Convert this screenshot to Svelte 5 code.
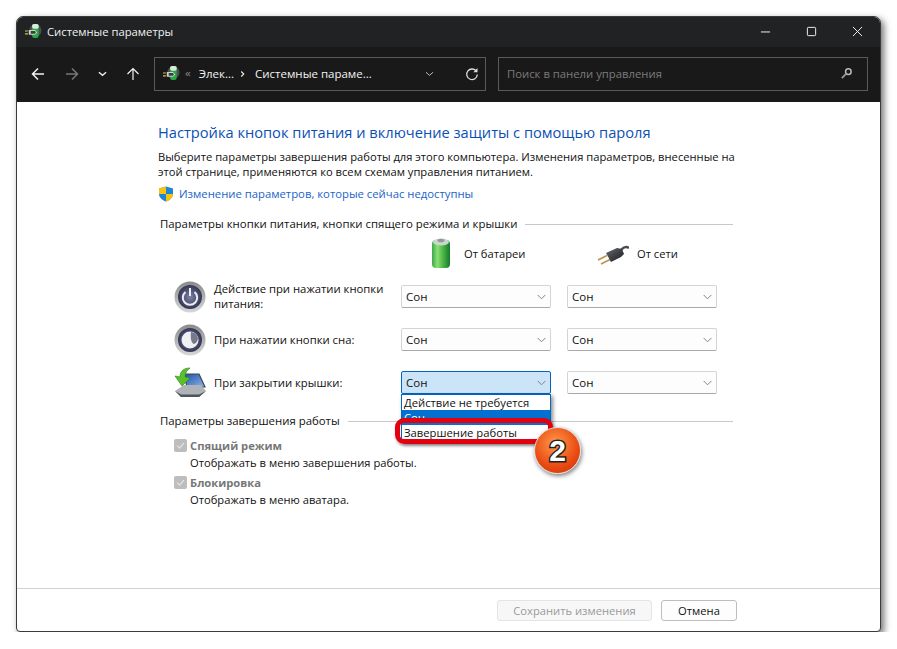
<script>
    const rows = [
        { label: "Действие при нажатии кнопки питания:", icon: "power" },
        { label: "При нажатии кнопки сна:", icon: "sleep" },
        { label: "При закрытии крышки:", icon: "lid" }
    ];

    const checks = [
        { title: "Спящий режим", note: "Отображать в меню завершения работы." },
        { title: "Блокировка", note: "Отображать в меню аватара." }
    ];
</script>

{#snippet appIcon()}
    <svg class="app-icon" viewBox="0 0 18 18">
        <circle cx="11" cy="8" r="6.500" fill="#4c4e4e" />
        <rect x="7.500" y="1" width="7" height="15" rx="2.500" fill="#27a845" />
        <rect x="7.500" y="1" width="7" height="5" rx="2" fill="#dbe8dd" />
        <path d="M4 7.500h6.500L13 10l-2.500 2.500H4z" fill="#cfd2d2" />
        <path d="M6 8.500h4.500l1 1.500-1 1.500H6z" fill="#3b3d3f" />
        <path d="M0 8.500h3M0 11.500h3" stroke="#e8c23a" stroke-width="1.200" />
    </svg>
{/snippet}

{#snippet chevron()}
    <svg class="chevron" viewBox="0 0 10 6">
        <path d="M.7.700 5 5 9.300.700" fill="none" stroke="#777" stroke-width="1" />
    </svg>
{/snippet}

<div class="window">
    <div class="titlebar">
        {@render appIcon()}
        <span class="title">Системные параметры</span>
        <div class="controls">
            <svg viewBox="0 0 12 12"><path d="M1 6.500h10" stroke="#fff" /></svg>
            <svg viewBox="0 0 12 12"><rect x="1.500" y="1.500" width="9" height="9" rx="1" fill="none" stroke="#fff" /></svg>
            <svg viewBox="0 0 12 12"><path d="M1 1l10 10M11 1 1 11" stroke="#fff" /></svg>
        </div>
    </div>

    <div class="toolbar">
        <div class="nav">
            <svg viewBox="0 0 14 14"><path d="M13 7H1.500M7 1.500 1.500 7 7 12.500" fill="none" stroke="#f2f2f2" stroke-width="1.500" /></svg>
            <svg viewBox="0 0 14 14"><path d="M1 7h11.500M7 1.500 12.500 7 7 12.500" fill="none" stroke="#777" stroke-width="1.500" /></svg>
            <svg class="small" viewBox="0 0 10 6"><path d="M1 1l4 3.500L9 1" fill="none" stroke="#eee" stroke-width="1.500" /></svg>
            <svg viewBox="0 0 14 14"><path d="M7 13V1.500M1.500 7 7 1.500 12.500 7" fill="none" stroke="#f2f2f2" stroke-width="1.200" /></svg>
        </div>
        <div class="address">
            {@render appIcon()}
            <span class="dim">«</span>
            <span>Элек...</span>
            <svg class="sep" viewBox="0 0 6 8"><path d="M1.500 1l3 3-3 3" fill="none" stroke="#eee" stroke-width="1.300" /></svg>
            <span>Системные параме...</span>
            <svg class="addr-down" viewBox="0 0 10 6"><path d="M1 1l4 3.500L9 1" fill="none" stroke="#ccc" /></svg>
            <svg class="refresh" viewBox="0 0 14 14"><path d="M11.500 4.500A5.300 5.300 0 1 0 12.300 7.500" fill="none" stroke="#ddd" stroke-width="1.300" /><path d="M12.500 1v4.200H8.300z" fill="#ddd" /></svg>
        </div>
        <div class="search">
            <span>Поиск в панели управления</span>
            <svg viewBox="0 0 14 14"><circle cx="9" cy="5" r="3" fill="none" stroke="#bbb" stroke-width="1.600" /><path d="M6.500 7.500 2 12" stroke="#999" stroke-width="2" /></svg>
        </div>
    </div>

    <div class="content">
        <h1>Настройка кнопок питания и включение защиты с помощью пароля</h1>
        <p class="intro">Выберите параметры завершения работы для этого компьютера. Изменения параметров, внесенные на этой странице, применяются ко всем схемам управления питанием.</p>
        <div class="elevate">
            <svg viewBox="0 0 16 16">
                <path d="M8 .5 15 2.500V8c0 3.500-3 6-7 7.500C4 14 1 11.500 1 8V2.500z" fill="#1f86d6" />
                <path d="M8 .5V8H1V2.500zM8 8h7c0 3.500-3 6-7 7.500z" fill="#f5c312" />
            </svg>
            <span>Изменение параметров, которые сейчас недоступны</span>
        </div>

        <div class="section first"><span>Параметры кнопки питания, кнопки спящего режима и крышки</span><i></i></div>

        <div class="grid">
            <div class="head battery">
                <svg viewBox="0 0 22 32">
                    <defs>
                        <linearGradient id="batt" x1="0" x2="1" y1="0" y2="0">
                            <stop offset="0" stop-color="#3fa84a" />
                            <stop offset=".3" stop-color="#8adf74" />
                            <stop offset=".6" stop-color="#4fb846" />
                            <stop offset="1" stop-color="#157a2c" />
                        </linearGradient>
                    </defs>
                    <rect x="2" y="3" width="18" height="28" rx="4" fill="url(#batt)" />
                    <ellipse cx="11" cy="5" rx="8" ry="3.500" fill="#c9d6cc" />
                    <ellipse cx="11" cy="3.500" rx="3.500" ry="1.800" fill="#8f9a92" />
                </svg>
                <span>От батареи</span>
            </div>
            <div class="head mains">
                <svg viewBox="0 0 32 23">
                    <defs>
                        <linearGradient id="plug" x1="0" x2="1" y1="0" y2="1">
                            <stop offset="0" stop-color="#6a6c72" />
                            <stop offset=".5" stop-color="#3e4046" />
                            <stop offset="1" stop-color="#1f2024" />
                        </linearGradient>
                    </defs>
                    <path d="M24 8C27 5 29 4 32 6" fill="none" stroke="#4a4c52" stroke-width="2.500" />
                    <path d="M1 18 10 13.500M4 22 13 17.500" stroke="#c4924f" stroke-width="1.800" />
                    <path d="M9 11 20 6l5 1 2 5-3 3-10 5z" fill="url(#plug)" />
                </svg>
                <span>От сети</span>
            </div>

            {#each rows as row, i}
                <div class="row-icon">
                    {#if row.icon === "lid"}
                        <svg viewBox="0 0 32 32">
                            <defs>
                                <linearGradient id="screen" x1="0" x2="1" y1="0" y2="1">
                                    <stop offset="0" stop-color="#1e4fa8" />
                                    <stop offset="1" stop-color="#8db6e6" />
                                </linearGradient>
                            </defs>
                            <path d="M10 7h15l6 13H13z" fill="url(#screen)" stroke="#3e4650" stroke-width="1.200" />
                            <path d="M1 24 10 18h17l5 6-7 6H7z" fill="#aeb3b8" />
                            <path d="M1 24l6 6h18l7-6-7 3.500H7z" fill="#4e545c" />
                            <path d="M16 1C10 1 6 4 6 10L1 9l7 10 8-8-5-1c0-4 2-7 5-9z" fill="#5cc02c" stroke="#2f8f1c" stroke-width=".7" />
                        </svg>
                    {:else}
                        <svg viewBox="0 0 32 32">
                            <defs>
                                <linearGradient id={"ring" + i} x1="0" x2="0" y1="0" y2="1">
                                    <stop offset="0" stop-color="#8a8a8a" />
                                    <stop offset="1" stop-color="#d8d8d8" />
                                </linearGradient>
                                <radialGradient id={"disc" + i} cx=".5" cy=".5" r=".55">
                                    <stop offset="0" stop-color="#7c82a4" />
                                    <stop offset="1" stop-color="#2b2f4c" />
                                </radialGradient>
                            </defs>
                            <circle cx="16" cy="16" r="15.500" fill={"url(#ring" + i + ")"} />
                            <circle cx="16" cy="16" r="12" fill={"url(#disc" + i + ")"} />
                            {#if row.icon === "power"}
                                <path d="M11.500 11a7.200 7.200 0 1 0 9 0" fill="none" stroke="#eeeef4" stroke-width="2" />
                                <path d="M16 7v8" stroke="#eeeef4" stroke-width="2" />
                            {:else}
                                <circle cx="16" cy="16" r="8.500" fill="#f0f0f4" />
                                <path d="M17 8c4 .5 6.500 3 7 6.500-.500 3-2 5-4 5.500-2-.5-4-4-3-12z" fill="#77798a" />
                            {/if}
                        </svg>
                    {/if}
                </div>
                <div class="row-label">{row.label}</div>
                <div class="select" class:open={i === 2}>
                    <span>Сон</span>{@render chevron()}
                    {#if i === 2}
                        <ul class="list">
                            <li>Действие не требуется</li>
                            <li class="current">Сон</li>
                            <li>Завершение работы</li>
                        </ul>
                        <div class="marker"></div>
                        <div class="badge">2</div>
                    {/if}
                </div>
                <div class="select"><span>Сон</span>{@render chevron()}</div>
            {/each}
        </div>

        <div class="section second"><span>Параметры завершения работы</span><i></i></div>

        <div class="checks">
            {#each checks as item}
                <div class="check">
                    <div class="box">
                        <svg viewBox="0 0 10 8"><path d="M1 4l3 3 5-6" fill="none" stroke="#e6e6e6" stroke-width="1.200" /></svg>
                    </div>
                    <div>
                        <div class="check-title">{item.title}</div>
                        <div class="check-note">{item.note}</div>
                    </div>
                </div>
            {/each}
        </div>
    </div>

    <div class="footer">
        <button class="save" disabled>Сохранить изменения</button>
        <button class="cancel">Отмена</button>
    </div>
</div>

<style>
    :global(body) {
        background: #fff;
    }

    .window {
        box-sizing: border-box;
        width: 865px;
        height: 616px;
        margin: 16px 0 0 16px;
        display: flex;
        flex-direction: column;
        background: #fff;
        border: 1px solid #3a3a3a;
        border-radius: 7px 7px 4px 4px;
        box-shadow: 3px 3px 7px rgba(0, 0, 0, 0.55);
        font-family: "Open Sans", "Noto Sans", sans-serif;
        font-size: 11.300px;
        color: #111;
    }

    .titlebar {
        height: 30px;
        box-sizing: border-box;
        padding: 0 0 2px 8px;
        display: flex;
        align-items: center;
        background: #202224;
        color: #f2f2f2;
        border-radius: 6px 6px 0 0;
        flex-shrink: 0;
    }

    .app-icon {
        width: 17px;
        height: 17px;
        flex-shrink: 0;
    }

    .title {
        margin-left: 5px;
        font-size: 11.250px;
    }

    .controls {
        margin-left: auto;
        display: flex;
        gap: 35px;
        padding-right: 17px;
    }

    .controls svg {
        width: 11px;
        height: 11px;
    }

    .toolbar {
        height: 55px;
        box-sizing: border-box;
        padding-bottom: 2px;
        display: flex;
        align-items: center;
        background: #191919;
        color: #f2f2f2;
        flex-shrink: 0;
    }

    .nav {
        width: 137px;
        display: flex;
        align-items: center;
        padding-left: 14px;
        box-sizing: border-box;
        gap: 20px;
    }

    .nav svg {
        width: 14px;
        height: 14px;
    }

    .nav svg.small {
        width: 9px;
        height: 6px;
        margin: 0 -1px;
    }

    .address, .search {
        box-sizing: border-box;
        height: 34px;
        display: flex;
        align-items: center;
        border: 1px solid #5a5a5a;
        background: #191919;
    }

    .address {
        width: 332px;
        padding-left: 8px;
        font-size: 11.500px;
        white-space: nowrap;
    }

    .dim {
        color: #888;
        margin: 0 8px 2px 5px;
    }

    .sep {
        width: 5px;
        height: 8px;
        margin: 0 10px 0 6px;
    }

    .addr-down {
        width: 9px;
        height: 6px;
        margin-left: auto;
    }

    .refresh {
        width: 14px;
        height: 14px;
        margin: 0 6px 0 31px;
    }

    .search {
        width: 370px;
        margin-left: 12px;
        padding: 0 14px 0 8px;
        justify-content: space-between;
        color: #7b7b7b;
        font-size: 11.300px;
    }

    .search svg {
        width: 13px;
        height: 13px;
    }

    .content {
        flex: 1;
        padding: 20px 0 0 141px;
        position: relative;
    }

    h1 {
        margin: 0;
        font-size: 14.650px;
        font-weight: 400;
        line-height: 20px;
        color: #0a4fb5;
    }

    .intro {
        width: 590px;
        margin: 7px 0 0;
        line-height: 15px;
        font-size: 11.200px;
    }

    .elevate {
        display: flex;
        align-items: center;
        gap: 5px;
        margin-top: 7px;
        color: #1a64c8;
        font-size: 11.300px;
        line-height: 16px;
    }

    .elevate svg {
        width: 16px;
        height: 16px;
    }

    .section {
        width: 573px;
        margin-left: 2px;
        display: flex;
        align-items: center;
        gap: 8px;
        font-size: 11.400px;
        line-height: 16px;
        white-space: nowrap;
    }

    .section i {
        flex: 1;
        height: 1px;
        background: #c8c8c8;
    }

    .section.first {
        margin-top: 14px;
    }

    .section.second {
        margin-top: 19px;
    }

    .grid {
        display: grid;
        grid-template-columns: 40px 187px 150px 166px;
        grid-template-rows: 28px repeat(3, 23px);
        row-gap: 20px;
        margin: 5px 0 0 16px;
    }

    .head {
        display: flex;
        align-items: center;
        height: 32px;
        font-size: 11.200px;
    }

    .battery {
        grid-column: 3;
        padding-left: 29px;
        gap: 12px;
    }

    .mains {
        grid-column: 4;
        padding-left: 30px;
        margin-left: 16px;
        gap: 8px;
        white-space: nowrap;
    }

    .battery svg {
        width: 22px;
        height: 32px;
    }

    .mains svg {
        width: 32px;
        height: 23px;
    }

    .row-icon {
        grid-column: 1;
        display: flex;
        align-items: center;
    }

    .row-icon svg {
        width: 32px;
        height: 32px;
    }

    .row-label {
        align-self: center;
        width: 178px;
        line-height: 15px;
        padding-bottom: 1px;
    }

    .select {
        position: relative;
        box-sizing: border-box;
        width: 150px;
        height: 23px;
        display: flex;
        align-items: center;
        justify-content: space-between;
        padding: 0 4px 0 4px;
        font-size: 11.500px;
        background: #fdfdfd;
        border: 1px solid #d4d4d4;
        border-bottom-color: #a8a8a8;
        border-radius: 2px;
    }

    .select + .select {
        margin-left: 16px;
    }

    .select.open {
        background: #cce4f7;
        border-color: #0565bd;
    }

    .chevron {
        width: 9px;
        height: 6px;
    }

    .list {
        position: absolute;
        z-index: 2;
        left: -1px;
        top: 22px;
        width: 150px;
        box-sizing: border-box;
        margin: 0;
        padding: 0;
        list-style: none;
        background: #fff;
        border: 1px solid #0565bd;
        box-shadow: 2px 2px 4px rgba(0, 0, 0, 0.45);
        line-height: 15px;
        font-size: 11.250px;
    }

    .list li {
        padding-left: 2px;
        white-space: nowrap;
    }

    .list .current {
        background: #0670d0;
        color: #fff;
    }

    .marker {
        position: absolute;
        z-index: 3;
        left: -7px;
        top: 46px;
        width: 158px;
        height: 26px;
        box-sizing: border-box;
        border: 5px solid #e3000f;
        border-radius: 9px;
        box-shadow: 1px 2px 3px rgba(0, 0, 0, 0.4);
    }

    .badge {
        position: absolute;
        z-index: 4;
        left: 132px;
        top: 55px;
        width: 47px;
        height: 47px;
        box-sizing: border-box;
        border-radius: 50%;
        background: radial-gradient(circle at 45% 35%, #ff9a4a, #ea4a12 60%, #c9300a);
        border: 1px solid #d8d8d8;
        box-shadow: 1px 2px 4px rgba(0, 0, 0, 0.5);
        display: flex;
        align-items: center;
        justify-content: center;
        font-family: "Liberation Sans", sans-serif;
        font-size: 30px;
        font-weight: 700;
        color: #fff;
        -webkit-text-stroke: 3px #222;
        paint-order: stroke fill;
    }

    .checks {
        margin: 9px 0 0 16px;
        display: flex;
        flex-direction: column;
        gap: 5px;
    }

    .check {
        display: flex;
        gap: 3px;
        line-height: 15px;
        font-size: 11.200px;
    }

    .box {
        width: 13px;
        height: 13px;
        margin-top: 1px;
        background: #bdbdbd;
        border-radius: 2px;
        display: flex;
        align-items: center;
        justify-content: center;
    }

    .box svg {
        width: 9px;
        height: 7px;
    }

    .check-title {
        color: #777;
        font-weight: 700;
        margin-bottom: 2px;
    }

    .footer {
        height: 43px;
        flex-shrink: 0;
        box-sizing: border-box;
        border-top: 1px solid #d0d0d0;
        display: flex;
        align-items: center;
        gap: 9px;
        padding-left: 480px;
        border-radius: 0 0 4px 4px;
    }

    button {
        height: 21px;
        font: inherit;
        font-size: 11.200px;
        padding: 0;
        border-radius: 3px;
    }

    .save {
        width: 155px;
        background: #f7f7f7;
        border: 1px solid #e4e4e4;
        color: #9a9a9a;
    }

    .cancel {
        width: 76px;
        background: #fdfdfd;
        border: 1px solid #bdbdbd;
        color: #111;
    }
</style>
